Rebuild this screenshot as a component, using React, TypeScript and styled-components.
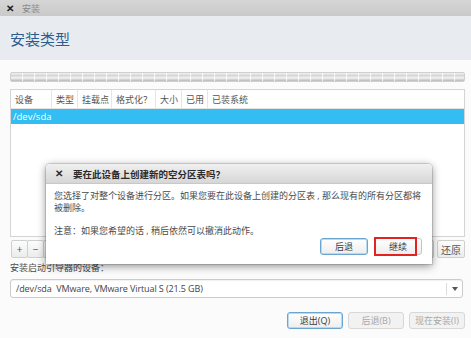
import styled, { createGlobalStyle } from 'styled-components';

const GlobalStyle = createGlobalStyle`
  html, body {
    margin: 0;
    padding: 0;
    background: #fbfbfb;
  }
  body {
    font-family: "Open Sans", "Noto Sans CJK SC", sans-serif;
    font-size: 9px;
    color: #3c3c3c;
  }
`;

const Window = styled.div`
  position: relative;
  width: 471px;
  height: 338px;
  display: flex;
  flex-direction: column;
  overflow: hidden;
  background: #fbfbfb;
`;

const TitleBar = styled.div`
  height: 16px;
  display: flex;
  align-items: center;
  gap: 8px;
  padding-left: 6px;
  background: linear-gradient(#d6d6d6, #c9c9c9);
  color: #8a8a8a;
  font-size: 9px;
`;

const CloseMark = styled.span`
  color: #1a1a1a;
  font-weight: bold;
  font-size: 10px;
  line-height: 1;
`;

const Header = styled.div`
  height: 44px;
  display: flex;
  align-items: center;
  padding-left: 10px;
  background: #e8ecf0;
`;

const PageTitle = styled.h1`
  margin: 0;
  font-size: 15px;
  font-weight: normal;
  color: #2d5d8e;
  font-family: "Noto Sans CJK SC", sans-serif;
`;

const Body = styled.div`
  flex: 1;
  display: flex;
  flex-direction: column;
  padding: 12px 6px 0 10px;
`;

const PartitionBar = styled.div`
  height: 8px;
  border-radius: 2px;
  background:
    repeating-linear-gradient(90deg, transparent 0 11px, rgba(255,255,255,0.8) 11px 12px),
    linear-gradient(#f2f2f2 0%, #d4d4d4 35%, #f4f4f4 60%, #b8b8b8 100%);
  border: 1px solid #d0d0d0;
`;

const Table = styled.div`
  margin-top: 7px;
  height: 146px;
  border: 1px solid #d4d4d4;
  background: #fff;
  display: flex;
  flex-direction: column;
`;

const HeaderRow = styled.div`
  height: 18px;
  display: grid;
  grid-template-columns: 41px 26px 34px 44px 26px 26px 1fr;
  border-bottom: 1px solid #e4e4e4;
`;

const HeaderCell = styled.div`
  display: flex;
  align-items: center;
  padding-left: 4px;
  color: #555;
  border-right: 1px solid #e6e6e6;
  &:last-child { border-right: none; }
`;

const SelectedRow = styled.div`
  height: 15px;
  display: flex;
  align-items: center;
  padding-left: 2px;
  background: #33bdf2;
  color: #fff;
  font-size: 9.5px;
`;

const Toolbar = styled.div`
  margin-top: 3px;
  height: 18px;
  display: flex;
  align-items: stretch;
`;

const ToolButton = styled.div<{ $gap?: boolean }>`
  display: flex;
  align-items: center;
  justify-content: center;
  min-width: 17px;
  padding: 0 3px;
  box-sizing: border-box;
  border: 1px solid #cfcfcf;
  border-radius: 2px;
  background: linear-gradient(#fdfdfd, #ececec);
  color: #555;
  font-size: 10px;
  margin-left: ${({ $gap }) => ($gap ? '3px' : '-1px')};
  &:first-child { margin-left: 1px; }
`;

const Spacer = styled.div`
  flex: 1;
`;

const Label = styled.div`
  margin-top: 4px;
  height: 12px;
  line-height: 12px;
  color: #4a4a4a;
`;

const Combo = styled.div`
  margin-top: 5px;
  margin-right: 2px;
  height: 17px;
  display: flex;
  align-items: center;
  border: 1px solid #c8ccd0;
  border-radius: 3px;
  background: #fff;
  box-shadow: inset 0 1px 1px rgba(0, 0, 0, 0.06);
`;

const ComboText = styled.div`
  flex: 1;
  padding-left: 5px;
  color: #444;
  font-size: 9px;
  letter-spacing: -0.1px;
  white-space: pre;
`;

const ComboArrow = styled.div`
  width: 15px;
  height: 12px;
  border-left: 1px solid #dcdcdc;
  display: flex;
  align-items: center;
  justify-content: center;
  &::after {
    content: '';
    border-left: 3px solid transparent;
    border-right: 3px solid transparent;
    border-top: 4px solid #555;
  }
`;

const Footer = styled.div`
  margin-top: 14px;
  display: flex;
  justify-content: flex-end;
  gap: 5px;
`;

const Button = styled.div<{ $variant?: 'focus' | 'disabled' | 'normal' }>`
  width: 56px;
  height: 17px;
  box-sizing: border-box;
  display: flex;
  align-items: center;
  justify-content: center;
  border-radius: 3px;
  font-size: 9px;
  border: 1px solid
    ${({ $variant }) =>
      $variant === 'focus' ? '#6aa6d0' : $variant === 'disabled' ? '#d8d8d8' : '#c4c4c4'};
  background: ${({ $variant }) =>
    $variant === 'disabled' ? '#f2f2f2' : 'linear-gradient(#ffffff, #eeeeee)'};
  color: ${({ $variant }) => ($variant === 'disabled' ? '#a8a8a8' : '#3a3a3a')};
  box-shadow: ${({ $variant }) =>
    $variant === 'focus' ? 'inset 0 0 0 1px #b9d9ef' : 'none'};
`;

const Dialog = styled.div`
  position: absolute;
  left: 46px;
  top: 164px;
  width: 386px;
  height: 100px;
  display: flex;
  flex-direction: column;
  background: #fff;
  border-radius: 4px 4px 0 0;
  box-shadow: 0 2px 8px rgba(0, 0, 0, 0.45), 0 0 0 1px rgba(0, 0, 0, 0.12);
  overflow: hidden;
`;

const DialogTitle = styled.div`
  height: 19px;
  display: flex;
  align-items: center;
  gap: 10px;
  padding-left: 9px;
  background: linear-gradient(#f0f0f0, #d6d6d6);
  border-bottom: 1px solid #c8c8c8;
  color: #2a2a2a;
  font-weight: bold;
  font-size: 9.5px;
`;

const DialogBody = styled.div`
  flex: 1;
  display: flex;
  flex-direction: column;
  padding: 6px 10px 0 8px;
  color: #4a4a4a;
  font-size: 9px;
  line-height: 12px;
`;

const Note = styled.p`
  margin: 11px 0 0;
`;

const Para = styled.p`
  margin: 0;
`;

const DialogButtons = styled.div`
  margin-top: 1px;
  display: flex;
  justify-content: flex-end;
  gap: 6px;
`;

const DialogButton = styled(Button)`
  width: 48px;
`;

const Highlight = styled.div`
  position: absolute;
  left: 374px;
  top: 237px;
  width: 43px;
  height: 19px;
  box-sizing: border-box;
  border: 2px solid #e32222;
  pointer-events: none;
`;

const columns = ['设备', '类型', '挂载点', '格式化？', '大小', '已用', '已装系统'];

export default function App() {
  return (
    <Window>
      <GlobalStyle />
      <TitleBar>
        <CloseMark>✕</CloseMark>
        <span>安装</span>
      </TitleBar>
      <Header>
        <PageTitle>安装类型</PageTitle>
      </Header>
      <Body>
        <PartitionBar />
        <Table>
          <HeaderRow>
            {columns.map((c) => (
              <HeaderCell key={c}>{c}</HeaderCell>
            ))}
          </HeaderRow>
          <SelectedRow>/dev/sda</SelectedRow>
        </Table>
        <Toolbar>
          <ToolButton>+</ToolButton>
          <ToolButton>−</ToolButton>
          <ToolButton>更改...</ToolButton>
          <Spacer />
          <ToolButton>新建分区表...</ToolButton>
          <ToolButton $gap>还原</ToolButton>
        </Toolbar>
        <Label>安装启动引导器的设备：</Label>
        <Combo>
          <ComboText>/dev/sda  VMware, VMware Virtual S (21.5 GB)</ComboText>
          <ComboArrow />
        </Combo>
        <Footer>
          <Button $variant="focus">退出(Q)</Button>
          <Button $variant="disabled">后退(B)</Button>
          <Button $variant="disabled">现在安装(I)</Button>
        </Footer>
      </Body>
      <Dialog>
        <DialogTitle>
          <span>✕</span>
          <span>要在此设备上创建新的空分区表吗？</span>
        </DialogTitle>
        <DialogBody>
          <Para>您选择了对整个设备进行分区。如果您要在此设备上创建的分区表 , 那么现有的所有分区都将被删除。</Para>
          <Note>注意：如果您希望的话 , 稍后依然可以撤消此动作。</Note>
          <DialogButtons>
            <DialogButton $variant="focus">后退</DialogButton>
            <DialogButton $variant="normal">继续</DialogButton>
          </DialogButtons>
        </DialogBody>
      </Dialog>
      <Highlight />
    </Window>
  );
}
